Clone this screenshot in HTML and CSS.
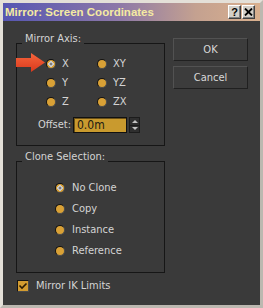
FILE: index.html
```html
<!doctype html>
<html>
  <head>
    <meta charset="utf-8">
    <title>Mirror: Screen Coordinates</title>
    <link rel="stylesheet" href="styles.css">
  </head>
  <body>

    <div class="window">
      <div class="titlebar">
        <span class="title">Mirror: Screen Coordinates</span>
        <span class="cap-btn help">?</span>
        <span class="cap-btn close">
          <svg width="9" height="8" viewBox="0 0 9 8"><path d="M1 0.5 L8 7.5 M8 0.5 L1 7.5" stroke="#000" stroke-width="1.8"/></svg>
        </span>
      </div>

      <div class="client">
        <div class="main">
          <fieldset class="group axis">
            <legend>Mirror Axis:</legend>
            <div class="axis-grid">
              <label class="opt"><span class="radio on"></span>X</label>
              <label class="opt"><span class="radio"></span>XY</label>
              <label class="opt"><span class="radio"></span>Y</label>
              <label class="opt"><span class="radio"></span>YZ</label>
              <label class="opt"><span class="radio"></span>Z</label>
              <label class="opt"><span class="radio"></span>ZX</label>
            </div>
            <div class="offset-row">
              <span class="offset-label">Offset:</span>
              <span class="field">0.0m</span>
              <span class="spinner">
                <span class="spin up"></span>
                <span class="spin down"></span>
              </span>
            </div>
          </fieldset>

          <fieldset class="group clone">
            <legend>Clone Selection:</legend>
            <div class="clone-list">
              <label class="opt"><span class="radio on"></span>No Clone</label>
              <label class="opt"><span class="radio"></span>Copy</label>
              <label class="opt"><span class="radio"></span>Instance</label>
              <label class="opt"><span class="radio"></span>Reference</label>
            </div>
          </fieldset>

          <label class="check-row">
            <span class="checkbox">
              <svg width="10" height="10" viewBox="0 0 10 10"><path d="M1.5 4.5 L4 7 L8.5 2.5" fill="none" stroke="#2b1c04" stroke-width="1.6"/></svg>
            </span>
            Mirror IK Limits
          </label>
        </div>

        <div class="actions">
          <span class="btn">OK</span>
          <span class="btn">Cancel</span>
        </div>
      </div>

      <svg class="pointer" width="30" height="20" viewBox="0 0 30 20">
        <defs>
          <linearGradient id="arrowfill" x1="0" y1="0" x2="0" y2="1">
            <stop offset="0" stop-color="#f7653c"/>
            <stop offset="1" stop-color="#d8391d"/>
          </linearGradient>
        </defs>
        <path d="M0 5 H15 V0 L29 9.5 L15 19 V14 H0 Z" fill="url(#arrowfill)"/>
      </svg>
    </div>

  </body>
</html>
```

FILE: styles.css
```css
body {
  margin: 0;
  padding: 0;
  background: #3a3a3a;
  font: 11px/14px "Liberation Sans Narrow", "DejaVu Sans Condensed", "Liberation Sans", sans-serif;
  color: #d4d4d4;
}

.window {
  position: relative;
  box-sizing: border-box;
  width: 263px;
  height: 308px;
  border: 3px solid #d4d0c8;
  border-top-color: #e4e0d8;
  border-left-color: #e4e0d8;
  border-right-color: #bcb8b0;
  border-bottom-color: #bcb8b0;
  display: flex;
  flex-direction: column;
}

.titlebar {
  height: 18px;
  display: flex;
  align-items: center;
  padding: 0 5px 0 2px;
  background: linear-gradient(to right, #5656b2, #8d78a8 45%, #c4a190 75%, #d9b08e);
}
.title {
  flex: 1;
  color: #f4eaa2;
  font: bold 11.5px/14px "Liberation Sans", sans-serif;
}
.cap-btn {
  box-sizing: border-box;
  width: 13px;
  height: 14px;
  margin-left: 1px;
  background: #d4d0c8;
  border: 1px solid;
  border-color: #fff #404040 #404040 #fff;
  box-shadow: inset -1px -1px 0 #808080;
  display: flex;
  align-items: center;
  justify-content: center;
  color: #000;
  font: bold 11px/12px "Liberation Sans", sans-serif;
}

.client {
  flex: 1;
  display: flex;
  align-items: flex-start;
  padding: 11px 0 0 13px;
  background: #3a3a3a;
}

.group {
  box-sizing: border-box;
  width: 149px;
  margin: 0;
  padding: 0;
  border: 1px solid #161616;
}
.group legend {
  margin-left: 5px;
  padding: 0 3px 8px;
  line-height: 14px;
}

.axis {
  padding-bottom: 12px;
}
.axis-grid {
  display: grid;
  grid-template-columns: 51px 51px;
  grid-auto-rows: 19px;
  padding-left: 29px;
}

.opt {
  display: flex;
  align-items: center;
  gap: 6px;
}
.clone {
  margin-top: 4px;
  padding-bottom: 11px;
}
.clone-list {
  padding: 5px 0 0 38px;
}
.clone .opt {
  height: 21px;
  gap: 7px;
}

.radio {
  box-sizing: border-box;
  width: 10px;
  height: 10px;
  border-radius: 50%;
  background: #d9a136;
  border: 1px solid;
  border-color: #121212 #4c4c4c #4c4c4c #121212;
}
.radio.on {
  background: radial-gradient(circle, #7d7d7d 0 1.5px, #cfcfcf 1.6px 2.6px, #d9a136 2.8px);
}

.offset-row {
  display: flex;
  align-items: center;
  margin-top: 6px;
}
.offset-label {
  width: 54px;
  margin-right: 2px;
  text-align: right;
}
.field {
  box-sizing: border-box;
  width: 54px;
  height: 16px;
  padding-left: 3px;
  background: #c99a2e;
  border: 1px solid #111;
  box-shadow: inset 1px 1px 0 #6a5016;
  color: #1c1a14;
  font-size: 12px;
  line-height: 14px;
}
.spinner {
  box-sizing: border-box;
  width: 11px;
  height: 16px;
  margin-left: 2px;
  background: #2f2f2f;
  border: 1px solid #1c1c1c;
  display: flex;
  flex-direction: column;
}
.spin {
  flex: 1;
  display: flex;
  align-items: center;
  justify-content: center;
}
.spin.up {
  border-bottom: 1px solid #1c1c1c;
}
.spin.up::before,
.spin.down::before {
  content: "";
  border-left: 3px solid transparent;
  border-right: 3px solid transparent;
}
.spin.up::before {
  border-bottom: 3px solid #c4c4c4;
}
.spin.down::before {
  border-top: 3px solid #c4c4c4;
}

.check-row {
  display: flex;
  align-items: center;
  gap: 7px;
  margin: 6px 0 0 1px;
}
.checkbox {
  box-sizing: border-box;
  width: 12px;
  height: 12px;
  background: #d39c30;
  border: 1px solid;
  border-color: #151515 #4a4a4a #4a4a4a #151515;
  display: flex;
  align-items: center;
  justify-content: center;
}

.actions {
  display: flex;
  flex-direction: column;
  gap: 5px;
  margin: 6px 0 0 8px;
}
.btn {
  box-sizing: border-box;
  width: 75px;
  height: 23px;
  display: flex;
  align-items: center;
  justify-content: center;
  background: #3c3c3c;
  border: 1px solid;
  border-color: #525252 #202020 #202020 #525252;
  color: #d8d8d8;
}

.pointer {
  position: absolute;
  left: 13px;
  top: 50px;
}
```
